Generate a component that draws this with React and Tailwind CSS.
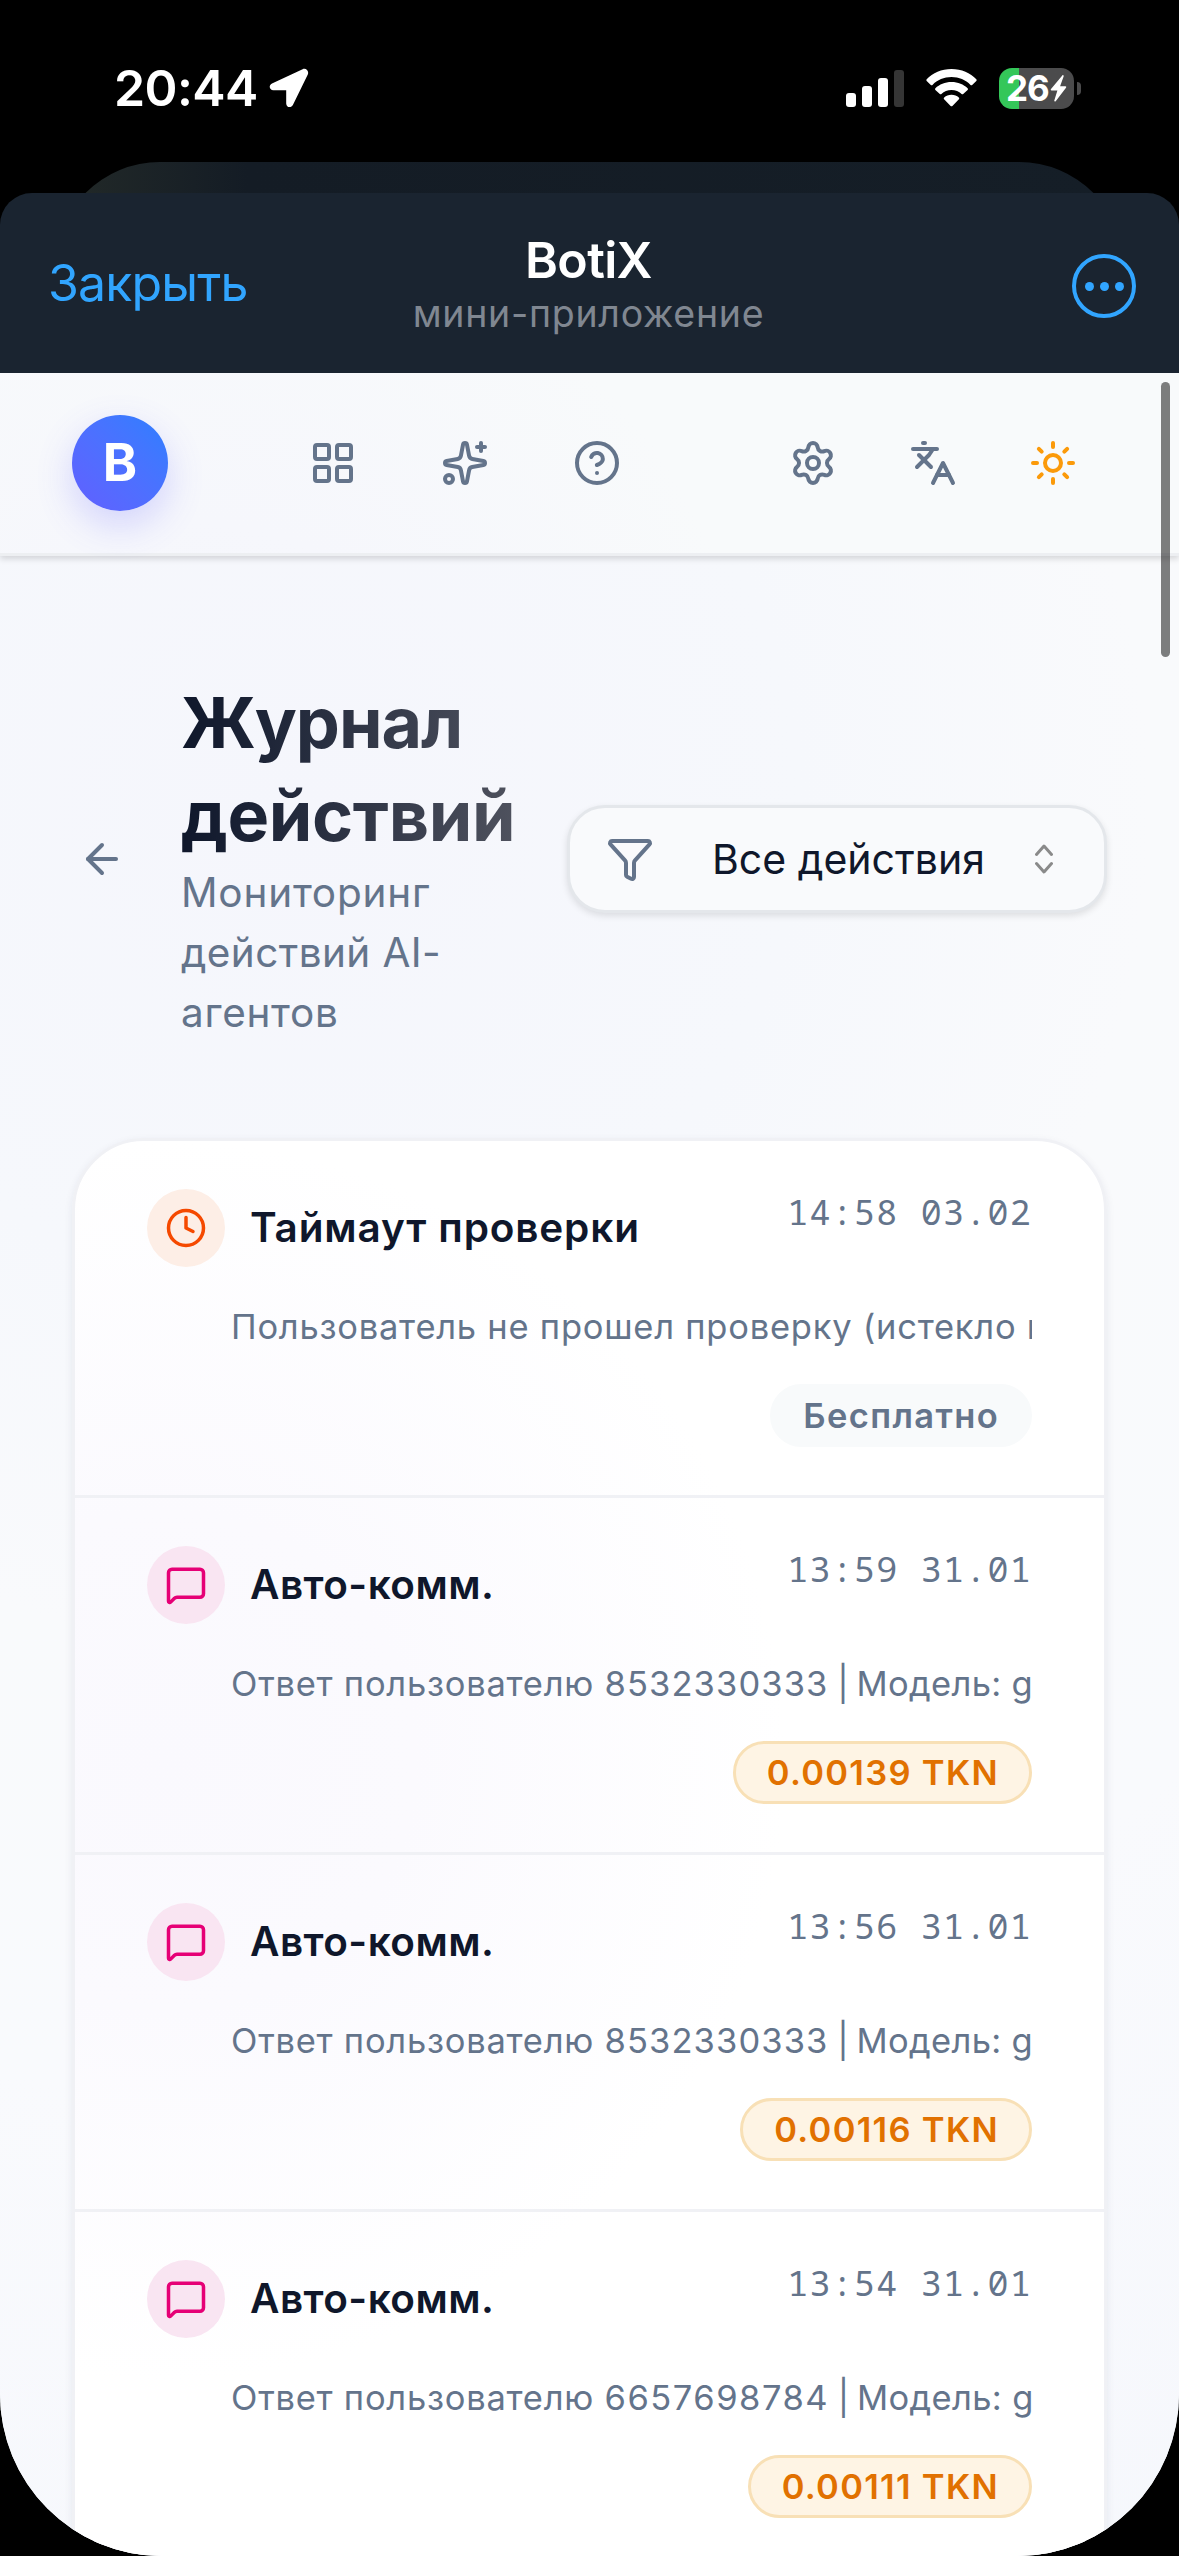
import React from "react";
import {
  ArrowLeft,
  CircleHelp,
  Clock,
  Funnel,
  Languages,
  LayoutGrid,
  MessageSquare,
  Settings,
  Sparkles,
  Sun,
} from "lucide-react";

function LocationArrow() {
  return (
    <svg viewBox="0 0 40 40" className="size-10" fill="#fff">
      <path d="M33.6 1.2 3 15.4C-.6 17.2.2 22.2 4.400 22.300H17.200V35.400C17.300 39.600 22.200 40.400 24 36.800L38.800 6.400C40.300 3 36.900-.3 33.600 1.200Z" />
    </svg>
  );
}

function Signal() {
  return (
    <div className="flex h-[37px] items-end gap-[6px]">
      <span className="h-[14px] w-[10px] rounded-[3px] bg-white" />
      <span className="h-[21px] w-[10px] rounded-[3px] bg-white" />
      <span className="h-[29px] w-[10px] rounded-[3px] bg-white" />
      <span className="h-[37px] w-[10px] rounded-[3px] bg-[#353535]" />
    </div>
  );
}

function Wifi() {
  return (
    <svg viewBox="0 0 51 38" className="h-[38px] w-[51px]" fill="#fff">
      <path d="M25.500 0C35.500 0 44.300 3.900 50.300 10.200 50.800 10.700 50.800 11.400 50.300 11.900L46.200 15.900C45.700 16.400 45 16.400 44.500 15.900 39.600 10.900 33 8 25.500 8S11.400 10.900 6.500 15.900C6 16.400 5.300 16.400 4.800 15.900L.7 11.900C.2 11.400.2 10.700.7 10.200 6.700 3.900 15.500 0 25.500 0Z" />
      <path d="M25.500 13C32 13 37.600 15.400 41.600 19.200 42.100 19.700 42.100 20.400 41.600 20.900L37.200 25C36.700 25.400 36.100 25.400 35.600 25 32.900 22.500 29.500 21 25.500 21S18.100 22.500 15.400 25C14.900 25.400 14.300 25.400 13.800 25L9.400 20.900C8.900 20.400 8.900 19.700 9.400 19.200 13.400 15.400 19 13 25.500 13Z" />
      <path d="M25.500 25.800C28.400 25.800 30.900 26.800 32.800 28.500 33.400 29 33.400 29.700 32.900 30.200L26.400 36.900C25.900 37.400 25.100 37.400 24.600 36.900L18.100 30.200C17.600 29.700 17.600 29 18.200 28.500 20.100 26.800 22.600 25.800 25.500 25.800Z" />
    </svg>
  );
}

function Battery() {
  return (
    <div className="flex items-center gap-[3px]">
      <div className="flex h-[41px] w-[75px] items-center rounded-[13px] bg-linear-to-r from-[#34c759] from-[27%] to-[#4b4b4c] to-[27%] pl-[7px]">
        <span className="text-[35px] leading-[41px] font-bold tracking-[-1px] text-white">26</span>
        <svg viewBox="0 0 17 27" className="ml-[1px] h-[27px] w-[17px]" fill="#fff">
          <path d="M12.300.4 1 14.100C.4 14.900.8 15.600 1.700 15.600H7.400L4.300 25.500C4 26.500 5 27 5.700 26.200L16 12.700C16.600 11.900 16.200 11.200 15.300 11.200H10.100L13.600 1.500C14 .4 13-.3 12.300.4Z" />
        </svg>
      </div>
      <span className="h-[13px] w-[4px] rounded-r-full bg-[#4b4b4c]" />
    </div>
  );
}

function StatusBar() {
  return (
    <div className="flex h-[162px] shrink-0 items-center justify-between pt-[14px] pr-[98px] pl-[114px] text-white">
      <div className="flex items-center gap-[11px]">
        <span className="text-[50px] leading-[60px] font-semibold tracking-[-0.6px]">20:44</span>
        <LocationArrow />
      </div>
      <div className="flex items-center gap-[22px]">
        <Signal />
        <Wifi />
        <Battery />
      </div>
    </div>
  );
}

function SheetHeader() {
  return (
    <div className="grid h-[180px] shrink-0 grid-cols-[1fr_auto_1fr] items-center rounded-t-[32px] bg-[#1a2430] pr-[43px] pl-[41px]">
      <span className="ml-[7px] text-[50px] leading-[60px] tracking-[-0.84px] text-[#31a5ff]">Закрыть</span>
      <div className="text-center">
        <div className="text-[50px] leading-[60px] font-semibold tracking-[-0.64px] text-white">BotiX</div>
        <div className="text-[37.5px] leading-[47px] tracking-[0.73px] text-[#808791]">мини-приложение</div>
      </div>
      <div className="mt-[6px] flex size-16 items-center justify-center gap-[6px] justify-self-end rounded-full border-4 border-[#31a5ff]">
        <span className="size-[9px] rounded-full bg-[#31a5ff]" />
        <span className="size-[9px] rounded-full bg-[#31a5ff]" />
        <span className="size-[9px] rounded-full bg-[#31a5ff]" />
      </div>
    </div>
  );
}

function NavBar() {
  return (
    <nav className="relative z-10 flex h-[183px] items-center justify-between border-b-[3px] border-[#edeff2] bg-[radial-gradient(circle_at_200px_400px,#f4f5fb_0,#f6f7fc_250px,#f8fafb_560px)] pr-[102px] pl-[72px] shadow-[0_3px_6px_rgba(0,0,0,0.14)]">
      <div className="flex items-center gap-[141px]">
        <div className="flex size-24 items-center justify-center rounded-full bg-linear-to-tr from-[#615fff] to-[#2b7fff] text-[52px] leading-none font-bold text-white shadow-[0_14px_36px_rgba(97,95,255,0.24)]">
          B
        </div>
        <div className="flex gap-[84px] text-[#64748b]">
          <LayoutGrid size={48} />
          <Sparkles size={48} />
          <CircleHelp size={48} />
        </div>
      </div>
      <div className="flex gap-[72px] text-[#64748b]">
        <Settings size={48} />
        <Languages size={48} />
        <Sun size={48} className="text-[#fb9a0a]" />
      </div>
    </nav>
  );
}

function FilterSelect() {
  return (
    <div className="flex h-[108px] w-[540px] shrink-0 items-center rounded-[38px] border-[3px] border-[#e4e7eb] bg-[#f9fafc] pr-[51px] pl-[36px] shadow-[0_3px_7px_rgba(0,0,0,0.11)]">
      <Funnel size={48} className="text-[#64748b]" />
      <span className="ml-[58px] text-[41px] leading-[60px] text-[#0f172b]">Все действия</span>
      <svg viewBox="0 0 18 30" className="ml-auto h-[30px] w-[18px]" fill="none" stroke="#8a8a8a" strokeWidth="3" strokeLinecap="round" strokeLinejoin="round">
        <path d="m1.500 10.500 7.500-8.500 7.500 8.500M1.500 19.500l7.500 8.500 7.500-8.500" />
      </svg>
    </div>
  );
}

function PageHeading() {
  return (
    <div className="flex items-center">
      <div className="flex w-[60px] shrink-0 justify-center text-[#64748b]">
        <ArrowLeft size={48} />
      </div>
      <div className="mr-[45px] ml-[49px] flex-1">
        <h1 className="bg-linear-to-r from-[#0f172b] to-[#50535f] bg-clip-text text-[70px] leading-[93px] font-bold text-transparent">
          <span className="block tracking-[-1.05px]">Журнал</span>
          <span className="block tracking-[-0.34px]">действий</span>
        </h1>
        <p className="-mb-px pt-px text-[40.500px] leading-[60px] text-[#64748b]">
          <span className="block tracking-[0.78px]">Мониторинг</span>
          <span className="block tracking-[0.4px]">действий AI-</span>
          <span className="block tracking-[0.7px]">агентов</span>
        </p>
      </div>
      <FilterSelect />
    </div>
  );
}

function ReplyText({ id, tight }) {
  return (
    <>
      <span className="tracking-[0.75px]">Ответ пользователю </span>
      <span className={tight ? "tracking-[1.1px]" : "tracking-[1.5px]"}>{id}</span>
      <span className="tracking-[-1px]"> | </span>
      <span className="tracking-[0.35px]">Модель: gpt</span>
    </>
  );
}

const entries = [
  { kind: "timeout", title: "Таймаут проверки", time: "14:58 03.02" },
  { kind: "reply", title: "Авто-комм.", time: "13:59 31.01", user: "8532330333", cost: "0.00139 TKN", tight: true },
  { kind: "reply", title: "Авто-комм.", time: "13:56 31.01", user: "8532330333", cost: "0.00116 TKN", tight: true },
  { kind: "reply", title: "Авто-комм.", time: "13:54 31.01", user: "6657698784", cost: "0.00111 TKN", tight: false },
];

function LogRow({ entry }) {
  const timeout = entry.kind === "timeout";
  return (
    <li className="h-[357px] border-b-[3px] border-[#f0f1f5] px-[72px] pt-12">
      <div className="flex items-start justify-between">
        <div className="flex items-center gap-[25px]">
          {timeout ? (
            <span className="flex size-[78px] items-center justify-center rounded-full bg-[#fdeee6] text-[#f54900]">
              <Clock size={42} />
            </span>
          ) : (
            <span className="flex size-[78px] items-center justify-center rounded-full bg-[#f9e5f2] text-[#e60076]">
              <MessageSquare size={42} />
            </span>
          )}
          <span className={timeout ? "text-[40.500px] font-semibold tracking-[0.85px] text-[#0f172b]" : "text-[40.500px] font-semibold tracking-[0.47px] text-[#0f172b]"}>
            {entry.title}
          </span>
        </div>
        <time className="font-['Noto_Sans_Mono','DejaVu_Sans_Mono',monospace] text-[35px] leading-[46px] tracking-[1.25px] text-[#64748b]">
          {entry.time}
        </time>
      </div>
      <p className="mt-[30px] ml-[84px] overflow-hidden text-[34.5px] leading-[60px] whitespace-nowrap text-[#64748b]">
        {timeout ? (
          <span className="tracking-[0.76px]">Пользователь не прошел проверку (истекло время)</span>
        ) : (
          <ReplyText id={entry.user} tight={entry.tight} />
        )}
      </p>
      <div className="mt-[27px] flex justify-end text-[34.5px] leading-[57px] font-semibold">
        {timeout ? (
          <span className="rounded-full border-[3px] border-[#f8fafb] bg-[#f8fafb] px-[30px] tracking-[1.35px] text-[#64748b]">Бесплатно</span>
        ) : (
          <span className="rounded-full border-[3px] border-[#f8e0b6] bg-[#fef4e4] pr-[30px] pl-[31px] tracking-[1.3px] text-[#e17100]">{entry.cost}</span>
        )}
      </div>
    </li>
  );
}

export default function App() {
  return (
    <div className="relative flex h-[2556px] w-[1179px] flex-col overflow-hidden bg-black font-['Inter',sans-serif]">
      <StatusBar />
      <div className="h-[31px] shrink-0 overflow-hidden px-[55px]">
        <div className="h-[210px] rounded-t-[105px] bg-linear-to-r from-[#232a28] via-[#141c25] via-[18%] to-[#151e27]" />
      </div>
      <SheetHeader />
      <div className="flex-1 overflow-hidden rounded-b-[162px] bg-[#f8fafc]">
        <NavBar />
        <main className="h-[2000px] bg-[radial-gradient(circle_at_300px_250px,#f5f6fc_0,#f6f8fc_500px,#f9fafc_850px,#f9fafd_1300px,#f5f7fc_2100px)] px-[72px] pt-[120px]">
          <PageHeading />
          <ul className="mt-[96px] h-[1500px] overflow-hidden rounded-[72px] border-[3px] border-[#f0f1f5] bg-[radial-gradient(circle_at_90px_620px,#faf9fe_0,#fbfafe_250px,#ffffff_620px)] shadow-[0_3px_9px_rgba(30,40,80,0.08)]">
            {entries.map((entry) => (
              <LogRow key={entry.time} entry={entry} />
            ))}
          </ul>
        </main>
      </div>
      <div className="absolute top-[382px] right-[9px] z-20 h-[275px] w-[9px] rounded-full bg-black/50" />
    </div>
  );
}
